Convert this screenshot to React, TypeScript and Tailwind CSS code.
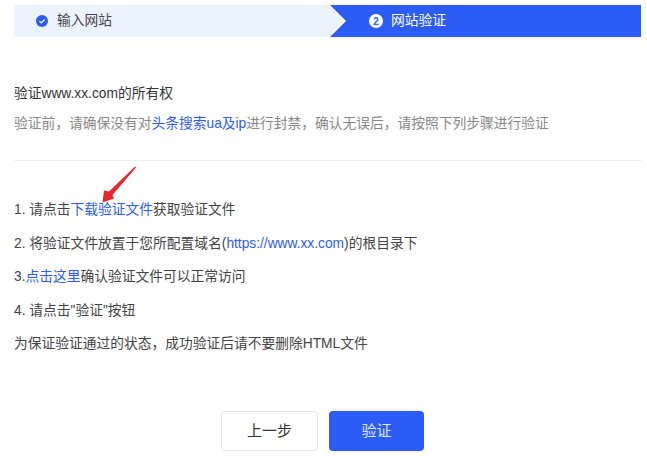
const font = "font-['Liberation_Sans','Noto_Sans_CJK_SC',sans-serif]";

function CheckDot() {
  return (
    <svg width="12" height="12" viewBox="0 0 12 12" className="shrink-0">
      <circle cx="6" cy="6" r="6" fill="#2b5cf6" />
      <path d="M3.4 6.1 5.3 7.9 8.6 4.5" fill="none" stroke="#fff" strokeWidth="1.3" />
    </svg>
  );
}

function Arrow() {
  return (
    <svg width="40" height="42" viewBox="0 0 40 42" className="absolute left-[100px] top-[165px]">
      <path d="M35 1.5 9 26.5 4 25.5 2.5 37.5 14 33.5 12.5 30 36 2.5Z" fill="#e8262c" />
    </svg>
  );
}

export default function App() {
  return (
    <div className={`${font} relative h-[456px] w-[647px] overflow-hidden bg-white text-[13.75px] text-[#333]`}>
      {/* Steps */}
      <div className="ml-[14px] mt-[5px] flex h-[32px] w-[627px]">
        <div className="flex w-[316px] items-center gap-[9px] bg-[#ebf3fe] pl-[22px] text-[#444]">
          <CheckDot />
          <span>输入网站</span>
        </div>
        <div className="relative flex flex-1 items-center gap-[8px] bg-[#2b5cf6] pl-[39px] text-white">
          <div className="absolute left-0 top-0 h-0 w-0 border-y-[16px] border-l-[16px] border-y-transparent border-l-white" />
          <div className="absolute left-[-2px] top-0 h-0 w-0 border-y-[16px] border-l-[16px] border-y-transparent border-l-[#ebf3fe]" />
          <span className="flex h-[14px] w-[14px] items-center justify-center rounded-full bg-white text-[10px] font-bold text-[#2b5cf6]">2</span>
          <span>网站验证</span>
        </div>
      </div>

      {/* Intro */}
      <div className="ml-[14px] mr-[5px] mt-[47px] border-b border-[#eeeeee] pb-[27px]">
        <div className="h-[19px] leading-[19px] text-[#333]">验证www.xx.com的所有权</div>
        <div className="mt-[11px] h-[19px] leading-[19px] text-[#888]">
          验证前，请确保没有对<span className="text-[#2b5cf6]">头条搜索ua及ip</span>进行封禁，确认无误后，请按照下列步骤进行验证
        </div>
      </div>

      {/* Steps text */}
      <div className="mx-[14px] mt-[39px] flex flex-col gap-[14.5px] text-[#444]">
        <div className="h-[19px] leading-[19px]">1. 请点击<span className="text-[#2b5cf6]">下载验证文件</span>获取验证文件</div>
        <div className="h-[19px] leading-[19px]">2. 将验证文件放置于您所配置域名(<span className="text-[#2b5cf6]">https://www.xx.com</span>)的根目录下</div>
        <div className="h-[19px] leading-[19px]">3.<span className="text-[#2b5cf6]">点击这里</span>确认验证文件可以正常访问</div>
        <div className="h-[19px] leading-[19px]">4. 请点击"验证"按钮</div>
        <div className="h-[19px] leading-[19px]">为保证验证通过的状态，成功验证后请不要删除HTML文件</div>
      </div>

      {/* Buttons */}
      <div className="ml-[221px] mt-[58px] flex gap-[11px] text-[15px]">
        <button className="h-[40px] w-[97px] rounded-[4px] border border-[#e5e5e5] bg-white text-[#333]">上一步</button>
        <button className="h-[40px] w-[95px] rounded-[4px] bg-[#2b5cf6] text-[#dfe7ff]">验证</button>
      </div>

      <Arrow />
    </div>
  );
}
